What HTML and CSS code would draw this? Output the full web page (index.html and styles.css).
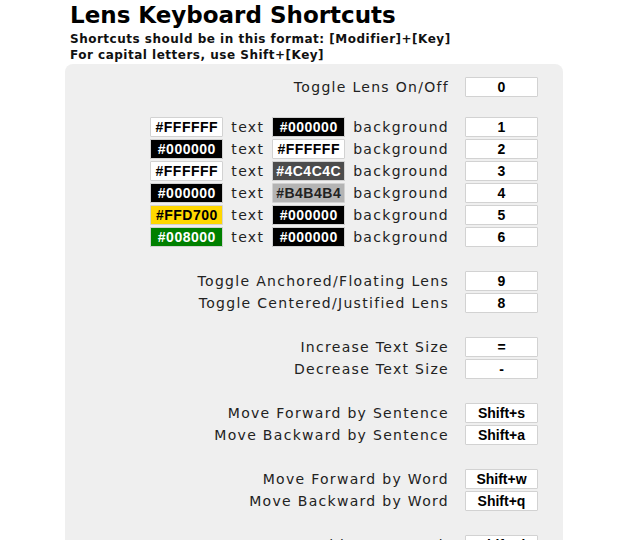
FILE: index.html
```html
<!DOCTYPE html>
<html lang="en">
<head>
    <meta charset="UTF-8">
    <title>Lens Keyboard Shortcuts</title>
    <link rel="stylesheet" href="styles.css">
</head>
<body>

    <!-- header -->
    <div class="intro">
        <h1>Lens Keyboard Shortcuts</h1>
        <p>Shortcuts should be in this format: [Modifier]+[Key]<br>For capital letters, use Shift+[Key]</p>
    </div>

    <!-- shortcut settings -->
    <div class="panel">
        <div class="row">
            <span class="label">Toggle Lens On/Off</span>
            <input class="key" type="text" value="0" readonly>
        </div>

        <div class="group first">
            <div class="row">
                <input class="swatch white" type="text" value="#FFFFFF" readonly>
                <span class="label">text</span>
                <input class="swatch black" type="text" value="#000000" readonly>
                <span class="label">background</span>
                <input class="key" type="text" value="1" readonly>
            </div>
            <div class="row">
                <input class="swatch black" type="text" value="#000000" readonly>
                <span class="label">text</span>
                <input class="swatch white" type="text" value="#FFFFFF" readonly>
                <span class="label">background</span>
                <input class="key" type="text" value="2" readonly>
            </div>
            <div class="row">
                <input class="swatch white" type="text" value="#FFFFFF" readonly>
                <span class="label">text</span>
                <input class="swatch dark" type="text" value="#4C4C4C" readonly>
                <span class="label">background</span>
                <input class="key" type="text" value="3" readonly>
            </div>
            <div class="row">
                <input class="swatch black" type="text" value="#000000" readonly>
                <span class="label">text</span>
                <input class="swatch light" type="text" value="#B4B4B4" readonly>
                <span class="label">background</span>
                <input class="key" type="text" value="4" readonly>
            </div>
            <div class="row">
                <input class="swatch gold" type="text" value="#FFD700" readonly>
                <span class="label">text</span>
                <input class="swatch black" type="text" value="#000000" readonly>
                <span class="label">background</span>
                <input class="key" type="text" value="5" readonly>
            </div>
            <div class="row">
                <input class="swatch green" type="text" value="#008000" readonly>
                <span class="label">text</span>
                <input class="swatch black" type="text" value="#000000" readonly>
                <span class="label">background</span>
                <input class="key" type="text" value="6" readonly>
            </div>
        </div>

        <div class="group">
            <div class="row">
                <span class="label">Toggle Anchored/Floating Lens</span>
                <input class="key" type="text" value="9" readonly>
            </div>
            <div class="row">
                <span class="label">Toggle Centered/Justified Lens</span>
                <input class="key" type="text" value="8" readonly>
            </div>
        </div>

        <div class="group">
            <div class="row">
                <span class="label">Increase Text Size</span>
                <input class="key" type="text" value="=" readonly>
            </div>
            <div class="row">
                <span class="label">Decrease Text Size</span>
                <input class="key" type="text" value="-" readonly>
            </div>
        </div>

        <div class="group">
            <div class="row">
                <span class="label">Move Forward by Sentence</span>
                <input class="key" type="text" value="Shift+s" readonly>
            </div>
            <div class="row">
                <span class="label">Move Backward by Sentence</span>
                <input class="key" type="text" value="Shift+a" readonly>
            </div>
        </div>

        <div class="group">
            <div class="row">
                <span class="label">Move Forward by Word</span>
                <input class="key" type="text" value="Shift+w" readonly>
            </div>
            <div class="row">
                <span class="label">Move Backward by Word</span>
                <input class="key" type="text" value="Shift+q" readonly>
            </div>
        </div>

        <div class="group">
            <div class="row">
                <span class="label">Move Forward by Paragraph</span>
                <input class="key" type="text" value="Shift+d" readonly>
            </div>
            <div class="row">
                <span class="label">Move Backward by Paragraph</span>
                <input class="key" type="text" value="Shift+e" readonly>
            </div>
        </div>
    </div>

</body>
</html>
```

FILE: styles.css
```css
body {
    margin: 0;
    background-color: #ffffff;
    color: #222;
    font-family: "DejaVu Sans", Verdana, sans-serif;
}

/* header */
.intro {
    padding-left: 70px;
}
.intro h1 {
    margin: 1px 0 0;
    font-size: 23px;
    line-height: 28px;
    font-weight: bold;
    color: #000;
}
.intro p {
    margin: 2px 0 0;
    font-size: 12px;
    line-height: 16px;
    font-weight: bold;
    letter-spacing: 0.5px;
    color: #111;
}

/* grey box */
.panel {
    margin: 1px 0 0 65px;
    width: 498px;
    padding: 12px 25px 40px 0;
    box-sizing: border-box;
    background-color: #efefef;
    border-radius: 8px;
}

.group {
    margin-top: 22px;
}
.group.first {
    margin-top: 18px;
}

.row {
    display: flex;
    justify-content: flex-end;
    align-items: center;
    gap: 8px;
    height: 22px;
}

.label {
    font-size: 14px;
    line-height: 22px;
    letter-spacing: 1.3px;
    color: #222;
    white-space: nowrap;
}

/* inputs */
.key,
.swatch {
    box-sizing: border-box;
    width: 73px;
    height: 20px;
    margin: 0;
    padding: 0;
    border: 1px solid #d2d2d2;
    border-radius: 1px;
    background-color: #fff;
    font-family: "Liberation Sans", Arial, sans-serif;
    font-weight: bold;
    font-size: 14px;
    text-align: center;
    color: #000;
    outline: none;
}
.key {
    margin-left: 8px;
}
.swatch {
    letter-spacing: 0.5px;
}

.swatch.white { background-color: #ffffff; color: #000; }
.swatch.black { background-color: #000000; color: #fff; }
.swatch.dark  { background-color: #4c4c4c; color: #fff; }
.swatch.light { background-color: #b4b4b4; color: #222; }
.swatch.gold  { background-color: #ffd700; color: #000; }
.swatch.green { background-color: #008000; color: #fff; }
```
